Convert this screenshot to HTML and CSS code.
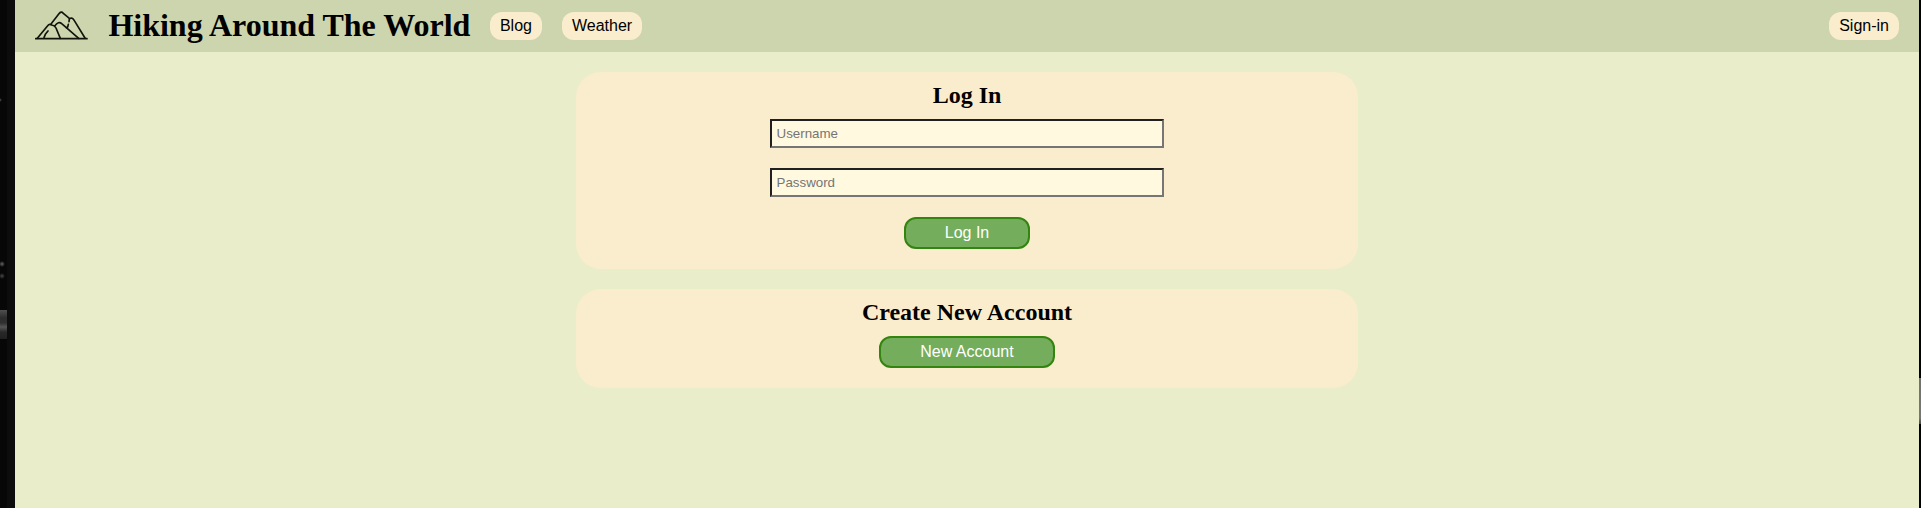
FILE: index.html
```html
<!DOCTYPE html>
<html lang="en">
<head>
<meta charset="utf-8">
<title>Hiking Around The World</title>
<link rel="stylesheet" href="styles.css">
</head>
<body>
<div class="edge edge-left"></div>
<div class="page">
  <header class="header">
    <svg class="logo" viewBox="105 33 162 90" fill="none" stroke="#10150c" stroke-width="5" stroke-linejoin="round" stroke-linecap="round">
      <path d="M107 116H261"/>
      <path d="M112 115L143 77Q148 70 155 75Q164 76 168 84L181 115"/>
      <path d="M153 72L178 40Q184 33 190 40L209 56Q217 51 223 62L255 114"/>
      <path d="M164 78Q176 62 185 71L199 83L236 115"/>
      <path d="M208 57L207 65M205 73L203 81L199 83M132 113L136 103L144 93"/>
    </svg>
    <h1 class="title">Hiking Around The World</h1>
    <nav class="nav">
      <a class="pill">Blog</a>
      <a class="pill">Weather</a>
    </nav>
    <a class="pill sign-in">Sign-in</a>
  </header>
  <main class="main">
    <form class="card">
      <h2 class="card-title">Log In</h2>
      <input class="field" type="text" placeholder="Username">
      <input class="field" type="password" placeholder="Password">
      <button class="button" type="button">Log In</button>
    </form>
    <section class="card">
      <h2 class="card-title">Create New Account</h2>
      <button class="button" type="button">New Account</button>
    </section>
  </main>
</div>
<div class="edge edge-right"></div>
</body>
</html>
```
FILE: styles.css
```css
* { box-sizing: border-box; }
body {
  margin: 0;
  height: 508px;
  display: flex;
  overflow: hidden;
  font-family: "Liberation Sans", Arial, sans-serif;
  font-size: 16px;
  color: #000;
}
.edge-left {
  width: 15px;
  background:
    radial-gradient(circle at 0 100px, #555 0, transparent 2px),
    radial-gradient(circle at 2px 264px, #666 0, transparent 3px),
    radial-gradient(circle at 2px 276px, #484848 0, transparent 3px),
    linear-gradient(#505050, #2c2c2c 8px, #303030 13px, #555 17px, #292929 22px, #202020 29px) 0 310px / 7px 29px no-repeat,
    linear-gradient(90deg, #070707 7px, #0c0c0c 7px);
}
.edge-right {
  width: 2px;
  background: linear-gradient(#727272, #777 40px, #484848) 0 378px / 2px 46px no-repeat, #030303;
}
.page {
  flex: 1;
  background: #e9edc9;
}
.header {
  height: 52px;
  padding: 0 20px;
  display: flex;
  align-items: center;
  background: #ccd5ae;
}
.logo {
  width: 54px;
  height: 30px;
  margin-right: 19.4px;
}
.title {
  margin: 0 19.6px 0 0;
  padding-bottom: 2px;
  font: bold 32px/36px "Liberation Serif", "Times New Roman", serif;
}
.nav { display: flex; gap: 20px; }
.pill {
  padding: 5px 10px;
  line-height: 18px;
  border-radius: 12px;
  background: #faedcd;
}
.sign-in { margin-left: auto; }
.main {
  padding-top: 20px;
  display: flex;
  flex-direction: column;
  align-items: center;
  gap: 20px;
}
.card {
  width: 782px;
  padding: 10px 0 20px;
  display: flex;
  flex-direction: column;
  align-items: center;
  gap: 20px;
  border-radius: 25px;
  background: #faedcd;
}
.card-title {
  margin: 0 0 -10px;
  font: bold 24px/27px "Liberation Serif", "Times New Roman", serif;
}
.field {
  width: 394px;
  height: 29px;
  padding: 5px 4.5px;
  border: 2px solid;
  border-color: #202020 #767676 #767676 #202020;
  background: #fff9e0;
  font: 13.333px "Liberation Sans", Arial, sans-serif;
}
.field::placeholder { color: #757575; }
.button {
  height: 32px;
  padding: 0 39px;
  border: 2px solid #338410;
  border-radius: 12px;
  background: #74ad5c;
  color: #fff;
  font: 16px/18px "Liberation Sans", Arial, sans-serif;
}
```
